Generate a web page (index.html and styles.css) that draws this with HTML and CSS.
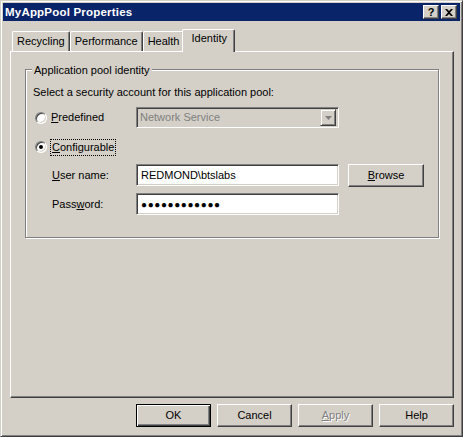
FILE: index.html
```html
<!DOCTYPE html>
<html lang="en">
<head>
    <meta charset="UTF-8">
    <title>MyAppPool Properties</title>
    <link rel="stylesheet" href="styles.css">
</head>
<body>
    <div class="window">
        <div class="titlebar">
            <span class="title">MyAppPool Properties</span>
            <div class="caption-buttons">
                <span class="cap-btn help">?</span>
                <span class="cap-btn close">
                    <svg width="8" height="7" viewBox="0 0 8 7">
                        <path d="M0 0h2l2 2 2-2h2L5 3.5 8 7H6L4 5 2 7H0l3-3.5z" fill="#000"/>
                    </svg>
                </span>
            </div>
        </div>

        <div class="dialog-body">
            <!-- Property sheet tabs -->
            <div class="tabs">
                <div class="tab">Recycling</div>
                <div class="tab">Performance</div>
                <div class="tab">Health</div>
                <div class="tab active">Identity</div>
            </div>

            <div class="panel">
                <div class="group">
                    <span class="legend">Application pool identity</span>
                    <p class="hint">Select a security account for this application pool:</p>

                    <div class="row predefined">
                        <div class="radio-label">
                            <span class="radio"></span>
                            <span><u>P</u>redefined</span>
                        </div>
                        <div class="select disabled">
                            <span class="select-text">Network Service</span>
                            <span class="drop">
                                <svg width="7" height="4" viewBox="0 0 7 4"><path d="M0 0h7L3.5 4z" fill="#808080"/></svg>
                            </span>
                        </div>
                    </div>

                    <div class="row configurable">
                        <div class="radio-label">
                            <span class="radio checked"></span>
                            <span class="focus"><u>C</u>onfigurable</span>
                        </div>
                    </div>

                    <div class="row field">
                        <span class="field-label"><u>U</u>ser name:</span>
                        <div class="textbox">REDMOND\btslabs</div>
                        <span class="btn browse"><u>B</u>rowse</span>
                    </div>

                    <div class="row field">
                        <span class="field-label">Pass<u>w</u>ord:</span>
                        <div class="textbox password">&#9679;&#9679;&#9679;&#9679;&#9679;&#9679;&#9679;&#9679;&#9679;&#9679;&#9679;&#9679;</div>
                    </div>
                </div>
            </div>

            <div class="footer">
                <span class="btn default">OK</span>
                <span class="btn">Cancel</span>
                <span class="btn disabled"><u>A</u>pply</span>
                <span class="btn">Help</span>
            </div>
        </div>
    </div>
</body>
</html>
```

FILE: styles.css
```css
* {
    margin: 0;
    padding: 0;
    box-sizing: border-box;
}
body {
    background: #d4d0c8;
    font-family: "Liberation Sans", Arial, sans-serif;
    font-size: 11px;
    line-height: 13px;
    color: #000;
}
.window {
    width: 463px;
    height: 437px;
    display: flex;
    flex-direction: column;
    padding: 2px;
    background: #d4d0c8;
    border: 1px solid;
    border-color: #d4d0c8 #404040 #404040 #d4d0c8;
    box-shadow: inset 1px 1px #fff, inset -1px -1px #808080;
}

/* title bar */
.titlebar {
    height: 18px;
    display: flex;
    align-items: center;
    justify-content: space-between;
    padding: 0 3px 0 2px;
    background: #0a246a;
}
.title {
    color: #fff;
    font-weight: bold;
    font-size: 11.5px;
    letter-spacing: 0.2px;
}
.caption-buttons {
    display: flex;
    gap: 2px;
}
.cap-btn {
    width: 16px;
    height: 14px;
    display: flex;
    align-items: center;
    justify-content: center;
    background: #d4d0c8;
    border: 1px solid;
    border-color: #fff #404040 #404040 #fff;
    box-shadow: inset -1px -1px #808080;
    font-weight: bold;
    font-size: 11px;
}

/* dialog */
.dialog-body {
    flex: 1;
    display: flex;
    flex-direction: column;
    padding: 8px 6px 7px 7px;
}
.tabs {
    display: flex;
    align-items: flex-end;
    height: 22px;
    padding-left: 2px;
}
.tab {
    height: 20px;
    padding: 3px 4px 0 4px;
    border: 1px solid;
    border-bottom: none;
    border-color: #fff #404040 #fff #fff;
    border-radius: 2px 2px 0 0;
    box-shadow: inset -1px 0 #808080;
}
.tab.active {
    position: relative;
    z-index: 1;
    height: 23px;
    margin: 0 -2px -1px;
    padding: 2px 7px 0 8px;
    background: #d4d0c8;
}
.panel {
    flex: 1;
    padding: 17px 14px 0;
    border: 1px solid;
    border-color: #fff #404040 #404040 #fff;
    box-shadow: inset -1px -1px #808080;
}

/* group box */
.group {
    position: relative;
    height: 169px;
    padding: 16px 7px 0;
    border: 1px solid #808080;
    box-shadow: inset 1px 1px #fff, 1px 1px #fff;
}
.legend {
    position: absolute;
    top: -6px;
    left: 6px;
    padding: 0 2px;
    background: #d4d0c8;
}
.row {
    display: flex;
    align-items: center;
}
.predefined {
    margin-top: 8px;
    height: 21px;
}
.configurable {
    margin-top: 11px;
    height: 16px;
}
.field {
    margin-top: 7px;
    height: 22px;
}
.configurable + .field {
    margin-top: 9px;
}
.radio-label {
    width: 103px;
    display: flex;
    align-items: center;
    gap: 4px;
    padding-left: 2px;
}
.radio {
    width: 12px;
    height: 12px;
    display: flex;
    align-items: center;
    justify-content: center;
    border-radius: 50%;
    background: #fff;
    border: 1px solid;
    border-color: #808080 #fff #fff #808080;
    box-shadow: inset 1px 1px #404040, inset -1px -1px #d4d0c8;
}
.radio.checked::after {
    content: "";
    width: 4px;
    height: 4px;
    border-radius: 50%;
    background: #000;
}
.focus {
    padding: 1px;
    outline: 1px dotted #000;
}
.field-label {
    width: 103px;
    padding-left: 19px;
}

/* inputs */
.select,
.textbox {
    width: 203px;
    height: 100%;
    display: flex;
    align-items: center;
    padding-left: 3px;
    background: #fff;
    border: 1px solid;
    border-color: #808080 #fff #fff #808080;
    box-shadow: inset 1px 1px #404040, inset -1px -1px #d4d0c8;
}
.select.disabled {
    background: #d4d0c8;
    color: #808080;
    justify-content: space-between;
    padding-right: 2px;
}
.drop {
    width: 16px;
    height: 17px;
    display: flex;
    align-items: center;
    justify-content: center;
    border: 1px solid;
    border-color: #d4d0c8 #404040 #404040 #d4d0c8;
    box-shadow: inset 1px 1px #fff, inset -1px -1px #808080;
}
.textbox {
    padding-left: 4px;
}
.password {
    font-size: 10px;
    letter-spacing: 0.6px;
}

/* buttons */
.btn {
    width: 75px;
    height: 23px;
    display: flex;
    align-items: center;
    justify-content: center;
    background: #d4d0c8;
    border: 1px solid;
    border-color: #fff #404040 #404040 #fff;
    box-shadow: inset -1px -1px #808080;
}
.browse {
    width: 76px;
    margin-left: 9px;
}
.btn.default {
    border: 1px solid #000;
    box-shadow: inset 1px 1px #fff, inset -1px -1px #404040, inset -2px -2px #808080;
}
.btn.disabled {
    color: #808080;
    text-shadow: 1px 1px #fff;
}
.footer {
    display: flex;
    justify-content: flex-end;
    gap: 6px;
    padding-top: 6px;
}
```
